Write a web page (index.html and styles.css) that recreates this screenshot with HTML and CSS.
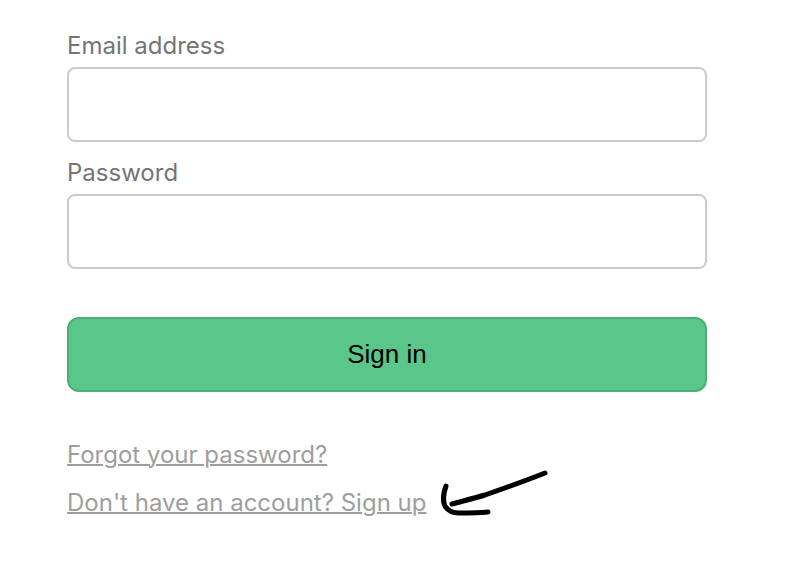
FILE: index.html
```html
<!DOCTYPE html>
<html lang="en">

<head>
	<meta charset="utf-8">
	<title>Sign in</title>
	<meta name="viewport" content="width=device-width, initial-scale=1">
	<link rel="stylesheet" href="styles.css">
</head>

<body>
	<main class="auth">
		<form class="auth-form">
			<div class="field">
				<label for="email">Email address</label>
				<input id="email" type="email" name="email">
			</div>
			<div class="field">
				<label for="password">Password</label>
				<input id="password" type="password" name="password">
			</div>
			<button class="submit" type="submit">Sign in</button>
		</form>
		<nav class="links">
			<a href="#forgot">Forgot your password?</a>
			<div class="signup">
				<a href="#signup">Don't have an account? Sign up</a>
				<svg class="arrow" width="112" height="50" viewBox="0 0 112 50" aria-hidden="true">
					<path d="M104 4C84 12 64 19 44 26C34 29 22 32 11 35" />
					<path d="M5 17C2 25 2 33 4 37C7 42 11 44 18 44C27 44 37 44 47 43" />
				</svg>
			</div>
		</nav>
	</main>
</body>

</html>
```

FILE: styles.css
```css
*,
*::before,
*::after {
	box-sizing: border-box;
}

:root {
	--control-height: 75px;
	--text: #757575;
	--muted: #9E9E9E;
	--border: #CCC;
	--green: #5BC689;
	--green-dark: #4BAF76;
}

body {
	margin: 0;
	background-color: #FFF;
	color: var(--text);
	font-family: Inter, "Liberation Sans", sans-serif;
	font-size: 24px;
	line-height: 32px;
}

.auth {
	padding: 30px 96px 30px 67px;
}

.auth-form {
	display: flex;
	flex-direction: column;
	gap: 15px;
}

.field {
	display: flex;
	flex-direction: column;
	gap: 5px;

	input {
		width: 100%;
		height: var(--control-height);
		border: 2px solid var(--border);
		border-radius: 8px;
		padding: 0 16px;
		background-color: #FFF;
		font: inherit;
	}
}

.submit {
	height: var(--control-height);
	margin-top: 33px;
	border: 2px solid var(--green-dark);
	border-radius: 12px;
	background-color: var(--green);
	color: #000;
	font-family: "Liberation Sans", Arial, sans-serif;
	font-size: 26px;
	cursor: pointer;
}

.links {
	display: flex;
	flex-direction: column;
	align-items: flex-start;
	gap: 16px;
	margin-top: 47px;

	a {
		color: var(--muted);
		text-decoration-thickness: 2px;
	}
}

.signup {
	position: relative;
}

/* hand-drawn pointer next to the sign up link */
.arrow {
	position: absolute;
	bottom: 0;
	left: 100%;
	margin-left: 15px;
	fill: none;
	stroke: #000;
	stroke-width: 5;
	stroke-linecap: round;
	stroke-linejoin: round;
}
```
